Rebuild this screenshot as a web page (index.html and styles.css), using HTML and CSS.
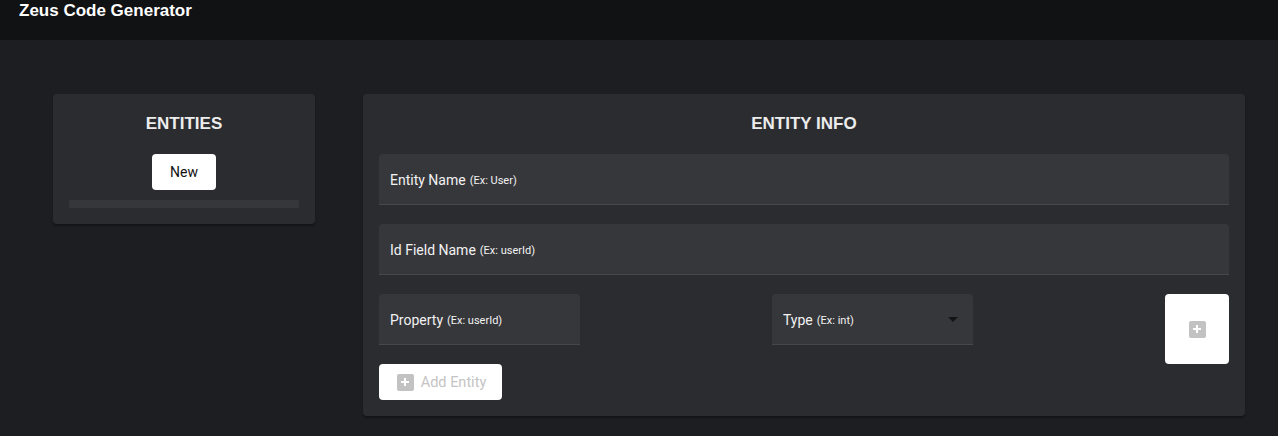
FILE: index.html
```html
<!DOCTYPE html>
<html>
<head>
<meta charset="utf-8">
<link rel="stylesheet" href="styles.css">
</head>
<body>
<header class="topbar"><span class="brand">Zeus Code Generator</span></header>
<main class="main">
  <section class="card entities">
    <h2 class="card-title">ENTITIES</h2>
    <button class="btn btn-new">New</button>
    <div class="list-bar"></div>
  </section>
  <section class="card info">
    <h2 class="card-title">ENTITY INFO</h2>
    <div class="field wide"><span class="label">Entity Name</span><small class="hint">(Ex: User)</small></div>
    <div class="field wide"><span class="label">Id Field Name</span><small class="hint">(Ex: userId)</small></div>
    <div class="prop-row">
      <div class="prop-left">
        <div class="field narrow"><span class="label">Property</span><small class="hint">(Ex: userId)</small></div>
        <button class="btn btn-add"><span class="plus-box"><svg width="10" height="10" viewBox="0 0 10 10"><path d="M5 1v8M1 5h8" stroke="#fff" stroke-width="2"/></svg></span>Add Entity</button>
      </div>
      <div class="field narrow select"><span class="label">Type</span><small class="hint">(Ex: int)</small><span class="arrow"></span></div>
      <button class="btn btn-plus"><span class="plus-box"><svg width="10" height="10" viewBox="0 0 10 10"><path d="M5 1v8M1 5h8" stroke="#fff" stroke-width="2"/></svg></span></button>
    </div>
  </section>
</main>
</body>
</html>
```
FILE: styles.css
```css
* { box-sizing: border-box; }
html, body { margin: 0; padding: 0; }
body {
  background: #1d1e22;
  height: 436px;
  overflow: hidden;
  font-family: Roboto, "Liberation Sans", sans-serif;
}
.topbar {
  height: 40px;
  background: #111214;
  padding: 1px 19px 0;
  line-height: 20px;
}
.brand {
  font-family: "Liberation Sans", Arial, sans-serif;
  font-weight: bold;
  font-size: 17px;
  color: #fff;
}
.main {
  display: flex;
  align-items: flex-start;
  padding: 54px 33px 0 53px;
  gap: 48px;
}
.card {
  background: #2b2c30;
  border-radius: 4px;
  box-shadow: 0 2px 2px rgba(0,0,0,0.35);
}
.card-title {
  margin: 0;
  font-family: "Liberation Sans", Arial, sans-serif;
  font-weight: bold;
  font-size: 17px;
  color: #ececec;
  text-align: center;
  line-height: 18px;
}
.entities {
  width: 262px;
  height: 130px;
  padding: 21px 16px 0;
  display: flex;
  flex-direction: column;
  align-items: center;
}
.btn {
  border: none;
  background: #fff;
  border-radius: 4px;
  font-family: Roboto, "Liberation Sans", sans-serif;
  padding: 0;
  display: flex;
  align-items: center;
  justify-content: center;
}
.btn-new {
  margin-top: 21px;
  width: 64px;
  height: 36px;
  font-size: 14px;
  color: #111;
}
.list-bar {
  margin-top: 10px;
  width: 230px;
  height: 8px;
  background: #36373b;
}
.info {
  width: 882px;
  height: 322px;
  padding: 21px 16px 0;
}
.field {
  background: #36373b;
  border-radius: 4px 4px 0 0;
  border-bottom: 1px solid #46474b;
  height: 51px;
  padding: 1px 11px 0;
  display: flex;
  align-items: center;
  color: #f2f2f2;
}
.wide { margin-top: 21px; }
.wide + .wide { margin-top: 19px; }
.label { font-size: 14px; }
.hint { font-size: 11px; margin-left: 4px; margin-top: 1px; }
.prop-row {
  margin-top: 19px;
  display: flex;
  align-items: flex-start;
}
.prop-left { width: 393px; }
.narrow { width: 201px; }
.select { position: relative; width: 201px; }
.arrow {
  position: absolute;
  right: 15px;
  top: 23px;
  border-left: 5px solid transparent;
  border-right: 5px solid transparent;
  border-top: 5px solid #141414;
}
.btn-add {
  margin-top: 19px;
  width: 123px;
  height: 36px;
  font-size: 14.5px;
  color: #c4c4c4;
  gap: 7px;
  padding-left: 2px;
}
.plus-box {
  width: 17px;
  height: 17px;
  background: #c2c2c2;
  border-radius: 2px;
  display: flex;
  align-items: center;
  justify-content: center;
}
.btn-plus {
  margin-left: auto;
  width: 64px;
  height: 70px;
}
```
